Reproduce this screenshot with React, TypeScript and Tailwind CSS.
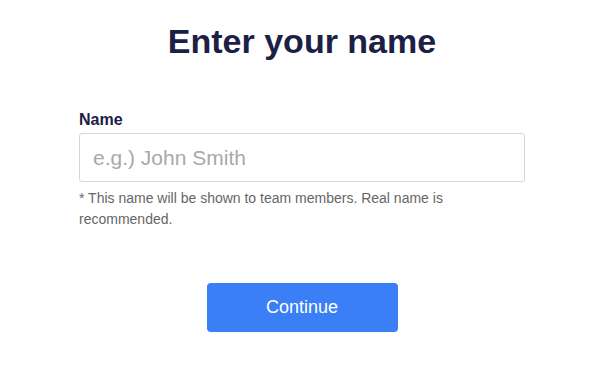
import { useState } from 'react'

export default function App() {
  const [name, setName] = useState('')

  return (
    <div className="min-h-screen bg-white pl-[4px] font-['Liberation_Sans',Arial,sans-serif]">
      {/* Title */}
      <h1 className="pt-[21px] text-center text-[34px] font-bold leading-[40px] text-[#1b2045]">
        Enter your name
      </h1>

      {/* Form */}
      <div className="mx-auto mt-[49px] w-[446px]">
        <label htmlFor="name" className="block text-[16px] font-bold leading-[20px] text-[#1b2045]">
          Name
        </label>
        <input
          id="name"
          value={name}
          onChange={e => setName(e.target.value)}
          placeholder="e.g.) John Smith"
          className="mt-[3px] block h-[49px] w-full rounded-[3px] border border-[#d6d6d6] px-[13px] text-[21px] text-[#333] outline-none placeholder:text-[#a9a9a9]"
        />
        <p className="mt-[6px] pr-[4px] text-[14px] leading-[21px] text-[#666]">
          * This name will be shown to team members. Real name is recommended.
        </p>
      </div>

      <div className="mt-[53px] flex justify-center">
        <button className="h-[49px] w-[191px] rounded-[4px] bg-[#3a7ff6] text-[18px] text-white">
          Continue
        </button>
      </div>
    </div>
  )
}
